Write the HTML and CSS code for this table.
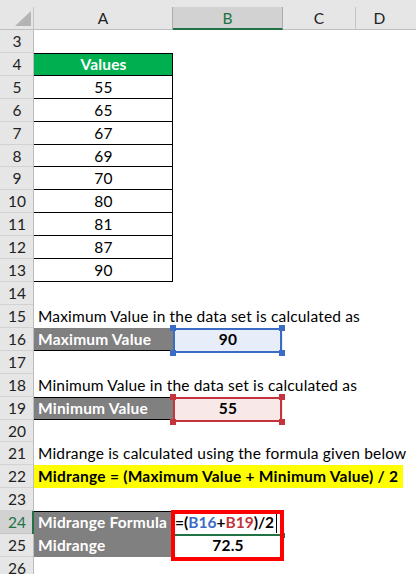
FILE: index.html
```html
<!DOCTYPE html>
<html>
<head>
<meta charset="utf-8">
<title>Midrange</title>
<link rel="stylesheet" href="styles.css">
</head>
<body>
<div class="sheet">
  <div class="colheads">
    <div class="corner"><svg width="16" height="15" viewBox="0 0 16 15"><polygon points="16,0 16,15 0,15" fill="#b4b4b4"/></svg></div>
    <div class="ch w-a">A</div>
    <div class="ch w-b sel">B</div>
    <div class="ch w-c">C</div>
    <div class="ch w-d">D</div>
  </div>

  <div class="row"><div class="rh">3</div></div>
  <div class="row"><div class="rh">4</div><div class="c ca tv top vhdr">Values</div></div>
  <div class="row"><div class="rh">5</div><div class="c ca tv">55</div></div>
  <div class="row"><div class="rh">6</div><div class="c ca tv">65</div></div>
  <div class="row"><div class="rh">7</div><div class="c ca tv">67</div></div>
  <div class="row s"><div class="rh">8</div><div class="c ca tv">69</div></div>
  <div class="row"><div class="rh">9</div><div class="c ca tv">70</div></div>
  <div class="row"><div class="rh">10</div><div class="c ca tv">80</div></div>
  <div class="row"><div class="rh">11</div><div class="c ca tv">81</div></div>
  <div class="row"><div class="rh">12</div><div class="c ca tv">87</div></div>
  <div class="row"><div class="rh">13</div><div class="c ca tv">90</div></div>
  <div class="row"><div class="rh">14</div></div>
  <div class="row"><div class="rh">15</div><div class="c ca txt">Maximum Value in the data set is calculated as</div></div>
  <div class="row"><div class="rh">16</div><div class="c ca lbl bb">Maximum Value</div>
    <div class="c cb ref ref-blue">90<span class="refbox"><i class="hd tl"></i><i class="hd tr"></i><i class="hd bl"></i><i class="hd br"></i></span></div></div>
  <div class="row"><div class="rh">17</div></div>
  <div class="row"><div class="rh">18</div><div class="c ca txt">Minimum Value in the data set is calculated as</div></div>
  <div class="row"><div class="rh">19</div><div class="c ca lbl bt bb">Minimum Value</div>
    <div class="c cb ref ref-red">55<span class="refbox"><i class="hd tl"></i><i class="hd tr"></i><i class="hd bl"></i><i class="hd br"></i></span></div></div>
  <div class="row s"><div class="rh">20</div></div>
  <div class="row"><div class="rh">21</div><div class="c ca txt">Midrange is calculated using the formula given below</div></div>
  <div class="row"><div class="rh">22</div><div class="c hl">Midrange = (Maximum Value + Minimum Value) / 2</div></div>
  <div class="row"><div class="rh">23</div></div>
  <div class="row"><div class="rh act">24</div><div class="c ca lbl bt">Midrange Formula</div>
    <div class="c cb fx">=(<span class="k-blue">B16</span>+<span class="k-red">B19</span>)/2<span class="caret"></span><span class="actline"></span><span class="acthandle"></span><span class="redbox"></span></div></div>
  <div class="row"><div class="rh">25</div><div class="c ca lbl">Midrange</div><div class="c cb num">72.5</div></div>
  <div class="row"><div class="rh">26</div></div>
</div>
</body>
</html>
```

FILE: styles.css
```css
html, body {
  margin: 0;
  padding: 0;
  background: #fff;
}
body {
  width: 416px;
  height: 574px;
  overflow: hidden;
  font-family: Lato, "Open Sans", sans-serif;
  font-size: 15.5px;
  letter-spacing: 0.17px;
  color: #000;
}
.sheet {
  width: 416px;
  overflow: hidden;
}

/* column headers */
.colheads {
  display: flex;
  height: 30px;
  padding-top: 7px;
  box-sizing: border-box;
  background: #e6e6e6;
  box-shadow: inset 0 -1px 0 #bfbfbf;
}
.corner {
  width: 34px;
  flex: none;
  height: 23px;
  box-sizing: border-box;
  border-right: 1px solid #c4c4c4;
}
.corner svg {
  display: block;
  margin: 4px 0 0 15px;
}
.ch {
  flex: none;
  height: 23px;
  box-sizing: border-box;
  border-right: 1px solid #c4c4c4;
  text-align: center;
  line-height: 22px;
  color: #222;
}
.w-a { width: 139px; border-right-color: #ababab; }
.w-b { width: 110px; }
.w-c { width: 73px; }
.w-d { width: 60px; padding-right: 13px; border-right: none; }
.ch.sel {
  background: #d2d2d2;
  border-right-color: #ababab;
  border-bottom: 2px solid #217346;
  color: #217346;
}

/* rows */
.row {
  display: flex;
  height: 23px;
}
.row.s {
  height: 22px;
}
.rh {
  width: 34px;
  flex: none;
  background: #e6e6e6;
  box-shadow: inset -1px 0 0 #bcbcbc, inset 0 -1px 0 #d2d2d2;
  text-align: center;
  line-height: 23px;
  letter-spacing: 0;
  color: #222;
}
.rh.act {
  background: #d2d2d2;
  color: #217346;
  box-shadow: inset -2px 0 0 #217346, inset 0 -1px 0 #c4c4c4;
}
.c {
  flex: none;
  position: relative;
  box-sizing: border-box;
  line-height: 23px;
  white-space: nowrap;
}
.row.s .rh, .row.s .c {
  line-height: 22px;
}
.ca { width: 139px; }
.cb { width: 110px; }

/* values table */
.tv {
  text-align: center;
  box-shadow: inset -1px -1px 0 #000;
}
.tv.top {
  box-shadow: inset -1px -1px 0 #000, inset 0 1px 0 #000;
}
.vhdr {
  background: #00b050;
  color: #fff;
  font-weight: 700;
}

/* plain overflowing text */
.txt {
  padding-left: 4px;
}

/* grey labels */
.lbl {
  background: #808080;
  color: #fff;
  font-weight: 700;
  letter-spacing: 0.2px;
  padding-left: 4px;
}
.lbl.bb { box-shadow: inset 0 -1px 0 #000; }
.lbl.bt { box-shadow: inset 0 1px 0 #000; }
.lbl.bt.bb { box-shadow: inset 0 1px 0 #000, inset 0 -1px 0 #000; }

/* referenced cells */
.ref {
  text-align: center;
  font-weight: 700;
}
.ref-blue { background: #e8eef9; }
.ref-red { background: #f9e8e8; }
.refbox {
  position: absolute;
  left: 0;
  top: 0;
  width: 109px;
  height: 25px;
  box-sizing: border-box;
  border: 2px solid #3a6cc6;
  z-index: 2;
}
.ref-red .refbox { border-color: #c3343c; }
.hd {
  position: absolute;
  width: 6px;
  height: 6px;
  background: #3a6cc6;
}
.ref-red .hd { background: #c3343c; }
.hd.tl { left: -5px; top: -5px; }
.hd.tr { right: -5px; top: -5px; }
.hd.bl { left: -5px; bottom: -5px; }
.hd.br { right: -5px; bottom: -5px; }

/* highlighted formula row */
.hl {
  width: 369px;
  background: #ffff00;
  font-weight: 700;
  letter-spacing: 0.25px;
  padding-left: 4px;
}

/* formula cell */
.fx {
  font-weight: 700;
  letter-spacing: 0;
  padding-left: 2px;
}
.k-blue { color: #3a6cc6; }
.k-red { color: #c3343c; }
.caret {
  display: inline-block;
  width: 1px;
  height: 20px;
  margin-left: 2px;
  background: #000;
  vertical-align: -5px;
}
.actline {
  position: absolute;
  left: 0;
  top: 23px;
  width: 110px;
  height: 2px;
  background: #217346;
  z-index: 2;
}
.acthandle {
  position: absolute;
  left: 107px;
  top: 22px;
  width: 5px;
  height: 5px;
  background: #217346;
  z-index: 2;
}
.redbox {
  position: absolute;
  left: -2px;
  top: -1px;
  width: 113px;
  height: 51px;
  box-sizing: border-box;
  border: 4px solid #ff0000;
  z-index: 3;
}
.num {
  text-align: center;
  font-weight: 700;
}
```
